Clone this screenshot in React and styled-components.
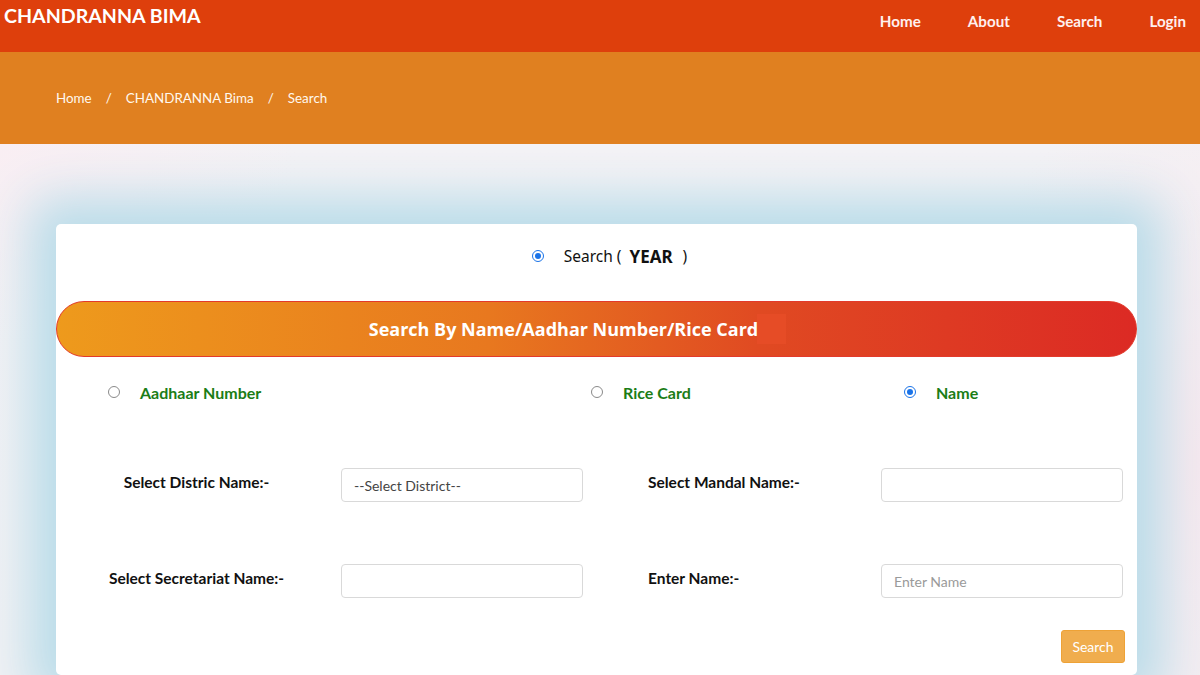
import React from "react";
import styled, { createGlobalStyle } from "styled-components";

const Global = createGlobalStyle`
  html, body { margin: 0; padding: 0; }
  body {
    font-family: Lato, "Open Sans", sans-serif;
    background: #f4f2f5;
    width: 1200px;
    height: 675px;
    overflow: hidden;
  }
  * { box-sizing: border-box; }
`;

const Header = styled.header`
  height: 52px;
  background: #de3f0c;
  display: flex;
  justify-content: space-between;
  align-items: flex-start;
  padding: 0 14px 0 4px;
`;

const Brand = styled.div`
  color: #fff;
  font-family: Lato, sans-serif;
  font-weight: 700;
  font-size: 19.6px;
  line-height: 32px;
`;

const Nav = styled.nav`
  display: flex;
  gap: 47px;
  padding-top: 11px;
`;

const NavLink = styled.a`
  color: #fff0ee;
  font-family: Lato, sans-serif;
  font-weight: 700;
  font-size: 15.2px;
  line-height: 20px;
  text-decoration: none;
`;

const Crumbs = styled.div`
  height: 92px;
  background: #e08020;
  display: flex;
  align-items: center;
  padding-left: 56px;
  color: #fff8ee;
  font-size: 13.4px;
  font-family: Lato, sans-serif;
  gap: 14px;
`;

const Stage = styled.main`
  height: 531px;
  background:
    radial-gradient(ellipse 300px 200px at 0% 0%, #f9eef3 0%, rgba(249,238,243,0) 100%),
    radial-gradient(ellipse 250px 400px at 100% 60%, #f7e8ee 0%, rgba(247,232,238,0) 100%),
    linear-gradient(180deg, #f4f2f5 0%, #f1f1f4 100%);
  padding: 80px 63px 0 56px;
`;

const Card = styled.section`
  background: #fff;
  border-radius: 5px;
  height: 100%;
  box-shadow: 0 0 50px 26px rgba(185, 220, 233, 1);
  display: flex;
  flex-direction: column;
`;

const YearRow = styled.label`
  display: flex;
  align-items: center;
  justify-content: center;
  height: 64px;
  padding-left: 26px;
  font-family: "Noto Sans", "Open Sans", sans-serif;
  font-size: 15.5px;
  color: #111;
`;

const Radio = styled.span`
  width: 12px;
  height: 12px;
  border-radius: 50%;
  flex: none;
  border: ${p => (p.$on ? "1px solid #1a73e8" : "1px solid #8a8a8a")};
  background: #fff;
  position: relative;
  margin-right: ${p => p.$gap || 14}px;
  &::after {
    content: "";
    display: ${p => (p.$on ? "block" : "none")};
    position: absolute;
    inset: 2px;
    border-radius: 50%;
    background: #1a73e8;
  }
`;

const Year = styled.b`
  font-weight: 700;
  font-size: 17px;
  margin: 0 10px 0 8px;
`;

const Banner = styled.div`
  height: 56px;
  margin: 13px 0 0;
  border-radius: 28px;
  border: 1.5px solid #e23a2c;
  background: linear-gradient(90deg, #ee9a1c 0%, #e8781f 40%, #e04a22 65%, #dc2a24 100%);
  display: flex;
  align-items: center;
  justify-content: center;
  padding-right: 38px;
`;

const BannerText = styled.span`
  color: #fff;
  font-family: "Open Sans", sans-serif;
  font-weight: 700;
  font-size: 18px;
  padding-right: 28px;
  line-height: 30px;
  background: linear-gradient(90deg, rgba(0,0,0,0) 93%, rgba(230,76,38,1) 93%);
`;

const Choices = styled.div`
  display: grid;
  grid-template-columns: 483px 313px auto;
  padding-left: 52px;
  margin-top: 25px;
  height: 20px;
  align-items: center;
`;

const Choice = styled.label`
  display: flex;
  align-items: center;
  color: #1b7d16;
  font-family: Lato, sans-serif;
  font-weight: 700;
  font-size: 16px;
`;

const Form = styled.div`
  display: grid;
  grid-template-columns: 285px 307px 233px 241px;
  grid-auto-rows: 34px;
  row-gap: 62px;
  margin-top: 66px;
`;

const Label = styled.div`
  font-family: Lato, sans-serif;
  font-weight: 700;
  font-size: 15.5px;
  color: #111;
  text-align: ${p => (p.$center ? "center" : "left")};
  padding-right: ${p => (p.$center ? "4px" : "0")};
  line-height: 28px;
`;

const Field = styled.div`
  width: 242px;
  height: 34px;
  border: 1px solid #d9d9d9;
  border-radius: 4px;
  background: #fff;
  display: flex;
  align-items: center;
  padding-left: 12px;
  font-family: Lato, sans-serif;
  font-size: 14px;
  color: ${p => (p.$placeholder ? "#9a9a9a" : "#444")};
`;

const Actions = styled.div`
  display: flex;
  justify-content: flex-end;
  padding-right: 12px;
  margin-top: 32px;
`;

const Button = styled.button`
  background: #f0ad4e;
  border: 1px solid #eea236;
  color: #fff;
  border-radius: 3px;
  width: 64px;
  height: 33px;
  font-family: Lato, sans-serif;
  font-size: 14px;
  padding: 0;
`;

export default function App() {
  return (
    <>
      <Global />
      <Header>
        <Brand>CHANDRANNA BIMA</Brand>
        <Nav>
          <NavLink>Home</NavLink>
          <NavLink>About</NavLink>
          <NavLink>Search</NavLink>
          <NavLink>Login</NavLink>
        </Nav>
      </Header>
      <Crumbs>
        <span>Home</span>
        <span>/</span>
        <span>CHANDRANNA Bima</span>
        <span>/</span>
        <span>Search</span>
      </Crumbs>
      <Stage>
        <Card>
          <YearRow>
            <Radio $on $gap={20} />
            Search (<Year>YEAR</Year>)
          </YearRow>
          <Banner>
            <BannerText>Search By Name/Aadhar Number/Rice Card</BannerText>
          </Banner>
          <Choices>
            <Choice><Radio $gap={20} />Aadhaar Number</Choice>
            <Choice><Radio $gap={20} />Rice Card</Choice>
            <Choice><Radio $on $gap={20} />Name</Choice>
          </Choices>
          <Form>
            <Label $center>Select Distric Name:-</Label>
            <Field>--Select District--</Field>
            <Label>Select Mandal Name:-</Label>
            <Field />
            <Label $center>Select Secretariat Name:-</Label>
            <Field />
            <Label>Enter Name:-</Label>
            <Field $placeholder>Enter Name</Field>
          </Form>
          <Actions>
            <Button>Search</Button>
          </Actions>
        </Card>
      </Stage>
    </>
  );
}
